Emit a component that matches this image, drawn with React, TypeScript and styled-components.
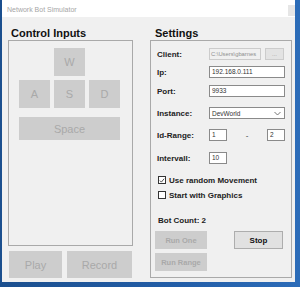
import styled, { createGlobalStyle } from "styled-components";

const GlobalStyle = createGlobalStyle`
  html, body {
    margin: 0;
    padding: 0;
    background: #235ea8;
  }
  body {
    font-family: "Liberation Sans", Arial, sans-serif;
  }
`;

export default function App() {
  return (
    <>
      <GlobalStyle />
      <Desktop>
        <Window>
          <TitleBar>
            <Title>Network Bot Simulator</Title>
            <CloseBox />
          </TitleBar>
          <Body>
            <LeftColumn>
              <Heading $indent={3}>Control Inputs</Heading>
              <ControlPanel>
                <KeyGrid>
                  <Key $col={2} $row={1}>W</Key>
                  <Key $col={1} $row={2}>A</Key>
                  <Key $col={2} $row={2}>S</Key>
                  <Key $col={3} $row={2}>D</Key>
                  <SpaceKey>Space</SpaceKey>
                </KeyGrid>
              </ControlPanel>
              <BottomButtons>
                <BigButton $width={53}>Play</BigButton>
                <BigButton $width={65}>Record</BigButton>
              </BottomButtons>
            </LeftColumn>

            <RightColumn>
              <Heading $indent={5}>Settings</Heading>
              <SettingsPanel>
                <Row $top={7}>
                  <Label>Client:</Label>
                  <TextBox $width={52} $disabled>C:\Users\gbarnes</TextBox>
                  <BrowseButton>...</BrowseButton>
                </Row>
                <Row $top={6}>
                  <Label>Ip:</Label>
                  <TextBox $width={76}>192.168.0.111</TextBox>
                </Row>
                <Row $top={7}>
                  <Label>Port:</Label>
                  <TextBox $width={76}>9933</TextBox>
                </Row>
                <Row $top={10}>
                  <Label>Instance:</Label>
                  <Select>
                    <span>DevWorld</span>
                    <svg width="7" height="5" viewBox="0 0 7 5">
                      <path d="M0.5 1 L3.5 4 L6.5 1" fill="none" stroke="#666" strokeWidth="0.9" />
                    </svg>
                  </Select>
                </Row>
                <Row $top={10}>
                  <Label>Id-Range:</Label>
                  <TextBox $width={18}>1</TextBox>
                  <Dash>-</Dash>
                  <TextBox $width={18}>2</TextBox>
                </Row>
                <Row $top={11}>
                  <Label>Intervall:</Label>
                  <TextBox $width={18}>10</TextBox>
                </Row>
                <CheckRow $top={11}>
                  <CheckBox>
                    <svg width="7" height="7" viewBox="0 0 7 7">
                      <path d="M1 3.6 L2.8 5.4 L6 1.4" fill="none" stroke="#333" strokeWidth="1" />
                    </svg>
                  </CheckBox>
                  <CheckLabel>Use random Movement</CheckLabel>
                </CheckRow>
                <CheckRow $top={5}>
                  <CheckBox />
                  <CheckLabel>Start with Graphics</CheckLabel>
                </CheckRow>
                <BotCount>Bot Count: 2</BotCount>
                <ActionRow>
                  <SmallButton>Run One</SmallButton>
                  <StopButton>Stop</StopButton>
                </ActionRow>
                <ActionRow $top={4}>
                  <SmallButton>Run Range</SmallButton>
                </ActionRow>
              </SettingsPanel>
            </RightColumn>
          </Body>
        </Window>
      </Desktop>
    </>
  );
}

const Desktop = styled.div`
  width: 300px;
  height: 287px;
  padding: 0 5px 5px 2px;
  box-sizing: border-box;
  background: linear-gradient(90deg, #1b4f8e 0%, #235ea8 60%, #2c6cb8 100%);
  overflow: hidden;
`;

const Window = styled.div`
  width: 293px;
  height: 282px;
  display: flex;
  flex-direction: column;
  background: #f0f0f0;
`;

const TitleBar = styled.div`
  height: 17px;
  flex: none;
  background: #ffffff;
  display: flex;
  align-items: flex-start;
  justify-content: space-between;
`;

const Title = styled.span`
  font-size: 7px;
  color: #a6a6a6;
  margin: 6px 0 0 5px;
`;

const CloseBox = styled.div`
  width: 7px;
  height: 11px;
  margin-top: 5px;
  background: #e6e6e6;
`;

const Body = styled.div`
  flex: 1;
  display: flex;
  gap: 17px;
  padding: 9px 3px 0 6px;
`;

const LeftColumn = styled.div`
  width: 125px;
  display: flex;
  flex-direction: column;
`;

const RightColumn = styled.div`
  width: 142px;
  display: flex;
  flex-direction: column;
`;

const Heading = styled.div<{ $indent: number }>`
  font-size: 11px;
  font-weight: bold;
  line-height: 14px;
  height: 14px;
  color: #111;
  padding-left: ${(p) => p.$indent}px;
`;

const ControlPanel = styled.div`
  height: 206px;
  box-sizing: border-box;
  border: 1px solid #a9a9a9;
  padding: 7px 0 0 10px;
`;

const KeyGrid = styled.div`
  display: grid;
  grid-template-columns: repeat(3, 31px);
  grid-auto-rows: 28px;
  column-gap: 4px;
  row-gap: 4px;
`;

const Key = styled.div<{ $col?: number; $row?: number }>`
  grid-column: ${(p) => (p.$col ? `${p.$col} / span 1` : "auto")};
  grid-row: ${(p) => (p.$row ? `${p.$row} / span 1` : "auto")};
  background: #cdcdcd;
  color: #a9a9a9;
  font-size: 11px;
  display: flex;
  align-items: center;
  justify-content: center;
`;

const SpaceKey = styled(Key)`
  grid-column: 1 / span 3;
  grid-row: 3 / span 1;
  margin-top: 5px;
`;

const BottomButtons = styled.div`
  display: flex;
  gap: 5px;
  margin-top: 5px;
  padding-left: 1px;
`;

const BigButton = styled.div<{ $width: number }>`
  width: ${(p) => p.$width}px;
  height: 27px;
  background: #cdcdcd;
  color: #a9a9a9;
  font-size: 11px;
  display: flex;
  align-items: center;
  justify-content: center;
`;

const SettingsPanel = styled.div`
  height: 238px;
  box-sizing: border-box;
  border: 1px solid #a9a9a9;
  padding: 0 6px 0 6px;
  display: flex;
  flex-direction: column;
`;

const Row = styled.div<{ $top: number }>`
  display: flex;
  align-items: center;
  height: 12px;
  margin-top: ${(p) => p.$top}px;
`;

const Label = styled.span`
  width: 52px;
  flex: none;
  font-size: 8px;
  font-weight: bold;
  color: #222;
`;

const TextBox = styled.div<{ $width: number; $disabled?: boolean }>`
  width: ${(p) => p.$width}px;
  height: 12px;
  box-sizing: border-box;
  border: 1px solid ${(p) => (p.$disabled ? "#cccccc" : "#8a8a8a")};
  background: ${(p) => (p.$disabled ? "#f0f0f0" : "#ffffff")};
  color: ${(p) => (p.$disabled ? "#8f8f8f" : "#333")};
  font-size: ${(p) => (p.$disabled ? "5.8px" : "6.5px")};
  line-height: 10px;
  padding-left: ${(p) => (p.$disabled ? "1px" : "2px")};
  white-space: nowrap;
  overflow: hidden;
`;

const BrowseButton = styled.div`
  width: 19px;
  height: 12px;
  box-sizing: border-box;
  margin-left: 4px;
  border: 1px solid #cccccc;
  background: #e3e3e3;
  color: #999;
  font-size: 6px;
  display: flex;
  align-items: center;
  justify-content: center;
`;

const Select = styled.div`
  width: 76px;
  height: 12px;
  box-sizing: border-box;
  border: 1px solid #8a8a8a;
  background: #ffffff;
  color: #333;
  font-size: 6.5px;
  padding: 0 3px 0 2px;
  display: flex;
  align-items: center;
  justify-content: space-between;
`;

const Dash = styled.span`
  width: 40px;
  text-align: center;
  font-size: 8px;
  color: #333;
`;

const CheckRow = styled.div<{ $top: number }>`
  display: flex;
  align-items: center;
  gap: 3px;
  height: 10px;
  margin-top: ${(p) => p.$top}px;
  padding-left: 1px;
`;

const CheckBox = styled.div`
  width: 8px;
  height: 8px;
  box-sizing: border-box;
  border: 1px solid #333;
  background: #fff;
  display: flex;
  align-items: center;
  justify-content: center;
`;

const CheckLabel = styled.span`
  font-size: 8px;
  font-weight: bold;
  color: #222;
`;

const BotCount = styled.div`
  margin-top: 16px;
  font-size: 8px;
  font-weight: bold;
  color: #222;
  height: 10px;
  line-height: 10px;
  padding-left: 1px;
`;

const ActionRow = styled.div<{ $top?: number }>`
  display: flex;
  justify-content: space-between;
  margin-top: ${(p) => p.$top ?? 5}px;
  margin-left: -2px;
  margin-right: 2px;
`;

const SmallButton = styled.div`
  width: 52px;
  height: 18px;
  background: #cdcdcd;
  color: #a9a9a9;
  font-size: 7.5px;
  font-weight: bold;
  display: flex;
  align-items: center;
  justify-content: center;
`;

const StopButton = styled.div`
  width: 49px;
  height: 18px;
  box-sizing: border-box;
  border: 1px solid #adadad;
  background: #e1e1e1;
  color: #111;
  font-size: 8px;
  font-weight: bold;
  display: flex;
  align-items: center;
  justify-content: center;
`;
